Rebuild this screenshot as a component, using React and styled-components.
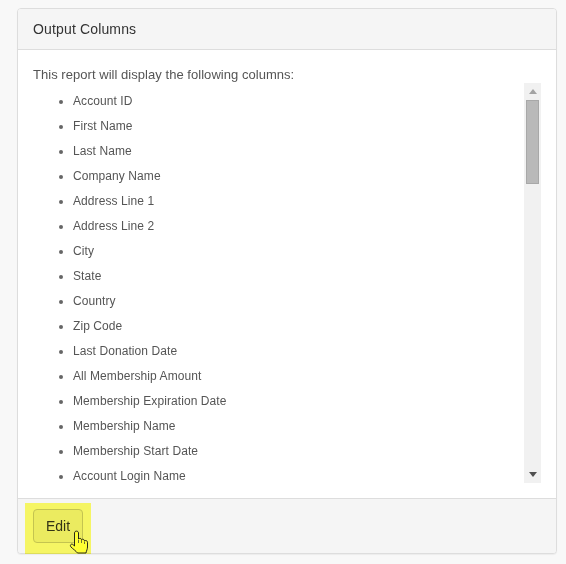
import React from "react";
import styled, { createGlobalStyle } from "styled-components";

const Global = createGlobalStyle`
  html, body { margin: 0; padding: 0; background: #f8f8f8; }
  body { font-family: "Liberation Sans", Arial, sans-serif; font-size: 12px; color: #555; }
`;
const Page = styled.div`
  width: 566px; height: 564px; box-sizing: border-box; padding: 8px 9px 10px 17px; overflow: hidden;
`;
const Panel = styled.section`
  height: 546px; box-sizing: border-box; display: flex; flex-direction: column;
  background: #fff; border: 1px solid #ddd; border-radius: 4px;
  box-shadow: 0 1px 1px rgba(0,0,0,.05);
`;
const Header = styled.header`
  height: 41px; box-sizing: border-box; flex: none; padding: 0 15px; display: flex; align-items: center;
  background: #f5f5f5; border-bottom: 1px solid #ddd; border-radius: 3px 3px 0 0;
  font-size: 14px; letter-spacing: .15px; color: #333;
`;
const Body = styled.div`
  flex: 1; min-height: 0; padding: 16px 15px 15px;
  display: flex; flex-direction: column;
`;
const Intro = styled.p`
  margin: 0; font-size: 13px; letter-spacing: .04px; line-height: 17px; color: #555;
`;
const ScrollArea = styled.div`
  height: 400px; flex: none; display: flex; overflow: hidden;
`;
const List = styled.ul`
  flex: 1; margin: 0; padding: 9px 0 0 40px; overflow: hidden; list-style: disc;
`;
const Item = styled.li`
  height: 25px; line-height: 17px; font-size: 12px; letter-spacing: .08px; color: #555; padding-top: 1px; box-sizing: border-box;
  &::marker { color: #666; }
`;
const Track = styled.div`
  width: 17px; flex: none; background: #f1f1f1; display: flex; flex-direction: column; align-items: center;
`;
const Arrow = styled.button`
  width: 17px; height: 17px; flex: none; padding: 0; border: 0; background: transparent;
  display: flex; align-items: center; justify-content: center;
`;
const Thumb = styled.div`
  width: 13px; height: 84px; flex: none; box-sizing: border-box; background: #b9b9b9; border: 1px solid #a8a8a8;
`;
const Spacer = styled.div`flex: 1;`;
const Footer = styled.footer`
  height: 55px; flex: none; box-sizing: border-box; padding: 10px 15px; position: relative;
  background: #f5f5f5; border-top: 1px solid #ddd; border-radius: 0 0 3px 3px;
`;
const Button = styled.button`
  width: 50px; height: 34px; padding: 0; border: 1px solid #c4c4c4; border-radius: 4px; background: #ebebeb;
  font-family: inherit; font-size: 14px; color: #333;
`;
const Highlight = styled.div`
  position: absolute; left: 7px; top: 4px; width: 66px; height: 51px;
  background: #ffff68; mix-blend-mode: multiply; pointer-events: none;
`;
const Cursor = styled.svg`
  position: absolute; left: 51px; top: 30px; width: 20px; height: 26px; z-index: 1; overflow: visible;
`;

const columns = [
  "Account ID", "First Name", "Last Name", "Company Name", "Address Line 1", "Address Line 2",
  "City", "State", "Country", "Zip Code", "Last Donation Date", "All Membership Amount",
  "Membership Expiration Date", "Membership Name", "Membership Start Date", "Account Login Name",
];

export default function App() {
  return (
    <Page>
      <Global />
      <Panel>
        <Header>Output Columns</Header>
        <Body>
          <Intro>This report will display the following columns:</Intro>
          <ScrollArea>
            <List>
              {columns.map((c) => <Item key={c}>{c}</Item>)}
            </List>
            <Track>
              <Arrow aria-label="Scroll up">
                <svg width="8" height="5" viewBox="0 0 8 5"><path d="M4 0 8 5H0z" fill="#a3a3a3" /></svg>
              </Arrow>
              <Thumb />
              <Spacer />
              <Arrow aria-label="Scroll down">
                <svg width="8" height="5" viewBox="0 0 8 5"><path d="M0 0H8L4 5z" fill="#505050" /></svg>
              </Arrow>
            </Track>
          </ScrollArea>
        </Body>
        <Footer>
          <Button>Edit</Button>
          <Highlight />
          <Cursor viewBox="0 0 20 26" aria-hidden="true">
            <path
              d="M5.500 4C5.500 1.500 9.500 1.500 9.500 4V10C10.500 9 12.300 9.300 12.500 10.600 13.500 9.800 15.300 10.300 15.500 11.800 16.500 11.100 18.500 11.700 18.500 13.300V18C18.500 20 17.500 21.500 17 24H8.500C7 22 4 20 2 18 .5 16.300 2.200 14.300 3.900 15.500L5.500 17z"
              fill="#ffff33" stroke="#111" strokeWidth=".9" strokeLinejoin="round"
            />
            <path d="M9.500 11V14M12.500 11V14M15.500 12.500V15" stroke="#333" strokeWidth=".7" fill="none" />
          </Cursor>
        </Footer>
      </Panel>
    </Page>
  );
}
